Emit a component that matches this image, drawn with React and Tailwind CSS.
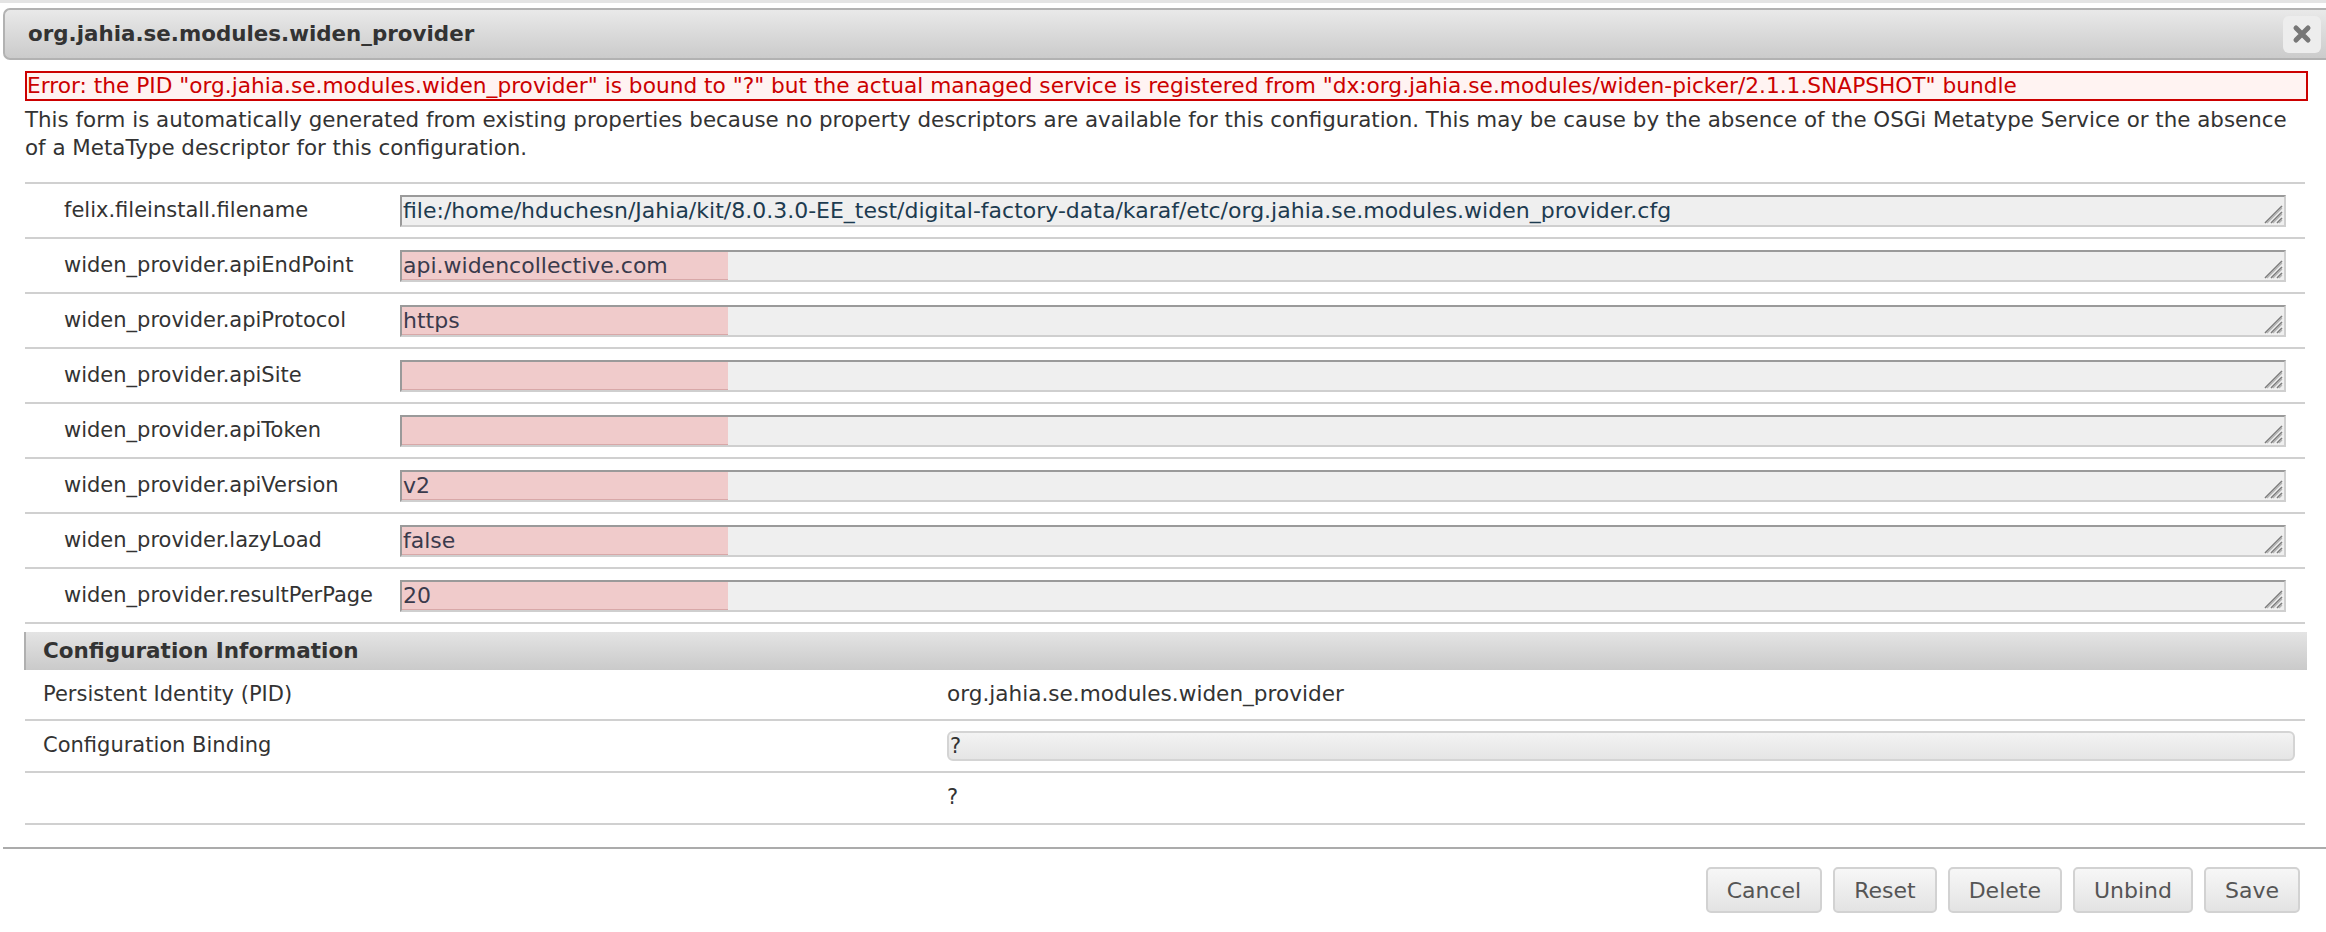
import React from "react";

const props = [
  { name: "felix.fileinstall.filename", value: "file:/home/hduchesn/Jahia/kit/8.0.3.0-EE_test/digital-factory-data/karaf/etc/org.jahia.se.modules.widen_provider.cfg", readonly: true },
  { name: "widen_provider.apiEndPoint", value: "api.widencollective.com" },
  { name: "widen_provider.apiProtocol", value: "https" },
  { name: "widen_provider.apiSite", value: "" },
  { name: "widen_provider.apiToken", value: "" },
  { name: "widen_provider.apiVersion", value: "v2" },
  { name: "widen_provider.lazyLoad", value: "false" },
  { name: "widen_provider.resultPerPage", value: "20" },
];

const ResizeGrip = () => (
  <svg width="20" height="20" viewBox="0 0 20 20" className="absolute right-[1px] bottom-[1px]">
    <path d="M19 2 L2 19 M19 8 L8 19 M19 14 L14 19" stroke="#7c7c7c" strokeWidth="1.6" fill="none" />
    <path d="M19 4 L4 19 M19 10 L10 19 M19 16 L16 19" stroke="#b4b4b4" strokeWidth="1.2" fill="none" />
  </svg>
);

const PropRow = ({ name, value, readonly }) => (
  <div className="flex items-center h-[55px] border-t-2 border-[#d0d0d0]">
    <div className="w-[375px] pl-[39px] shrink-0 whitespace-nowrap">{name}</div>
    <div className="relative flex-1 mr-[19px] h-[32px] border-2 border-t-[#9a9a9a] border-l-[#9a9a9a] border-b-[#cfcfcf] border-r-[#cfcfcf] bg-[#efefef]">
      {!readonly && (
        <div className="absolute left-0 top-0 bottom-0 w-[326px] bg-[#f0cbcb] border-b border-[#d8a8a8]" />
      )}
      <div className={"relative pl-[1px] text-[22px] leading-[27px] whitespace-nowrap " + (readonly ? "text-[#1d3b50]" : "text-[#3a3a4c]")}>
        {value}
      </div>
      <ResizeGrip />
    </div>
  </div>
);

const Button = ({ label }) => (
  <button className="h-[46px] px-[19px] border-2 border-[#d2d2d2] rounded-[5px] bg-gradient-to-b from-[#f7f7f7] to-[#e3e3e3] text-[#555] text-[22px]">
    {label}
  </button>
);

export default function App() {
  return (
    <div className="w-[2326px] h-[932px] overflow-hidden bg-white font-['DejaVu_Sans',sans-serif] text-[21px] text-[#333]">
      <div className="h-[3px] bg-[#e4e4e4]" />
      <div className="mt-[5px] ml-[3px] h-[52px] rounded-l-[7px] border-2 border-r-0 border-[#b2b2b2] bg-gradient-to-b from-[#e9e9e9] to-[#cbcbcb] flex items-center justify-between pl-[23px] pr-[5px]">
        <span className="font-bold text-[21.4px]">org.jahia.se.modules.widen_provider</span>
        <div className="w-[38px] h-[37px] rounded-[6px] bg-[#ededed] flex items-center justify-center">
          <svg width="20" height="20" viewBox="0 0 20 20">
            <path d="M4 4 L16 16 M16 4 L4 16" stroke="#777" strokeWidth="5" strokeLinecap="round" />
          </svg>
        </div>
      </div>

      <div className="pl-[25px] pr-[18px] text-[21.4px]">
        <div className="mt-[11px] h-[30px] border-2 border-[#cc0000] bg-[#fff3f2] text-[#cc0000] text-[21.7px] leading-[26px] whitespace-nowrap">
          Error: the PID "org.jahia.se.modules.widen_provider" is bound to "?" but the actual managed service is registered from "dx:org.jahia.se.modules/widen-picker/2.1.1.SNAPSHOT" bundle
        </div>
        <p className="mt-[5px] leading-[28px]">
          This form is automatically generated from existing properties because no property descriptors are available for this configuration. This may be cause by the absence of the OSGi Metatype Service or the absence of a MetaType descriptor for this configuration.
        </p>
      </div>

      <div className="mt-[20px] ml-[25px] w-[2280px] border-b-2 border-[#d0d0d0]">
        {props.map((p) => (
          <PropRow key={p.name} {...p} />
        ))}
      </div>

      <div className="mt-[8px] ml-[24px] w-[2283px] h-[38px] border-l-2 border-[#b0b0b0] bg-gradient-to-b from-[#e4e4e4] to-[#cacaca] flex items-center pl-[17px] font-bold text-[21.5px]">
        Configuration Information
      </div>

      <div className="ml-[25px] w-[2280px]">
        <div className="flex items-center h-[51px] border-b-2 border-[#d0d0d0]">
          <div className="w-[922px] pl-[18px] shrink-0">Persistent Identity (PID)</div>
          <div className="text-[21.6px]">org.jahia.se.modules.widen_provider</div>
        </div>
        <div className="flex items-center h-[52px] border-b-2 border-[#d0d0d0]">
          <div className="w-[922px] pl-[18px] shrink-0">Configuration Binding</div>
          <div className="flex-1 mr-[10px] h-[30px] rounded-[6px] border-2 border-[#d4d4d4] bg-gradient-to-b from-[#f3f3f3] to-[#e5e5e5] leading-[26px] pl-[1px]">
            ?
          </div>
        </div>
        <div className="flex items-center h-[52px] border-b-2 border-[#d0d0d0]">
          <div className="w-[922px] shrink-0" />
          <div>?</div>
        </div>
      </div>

      <div className="mt-[22px] ml-[3px] border-t-2 border-[#ababab]" />

      <div className="mt-[18px] flex justify-end gap-[11px] pr-[26px]">
        <Button label="Cancel" />
        <Button label="Reset" />
        <Button label="Delete" />
        <Button label="Unbind" />
        <Button label="Save" />
      </div>
    </div>
  );
}
